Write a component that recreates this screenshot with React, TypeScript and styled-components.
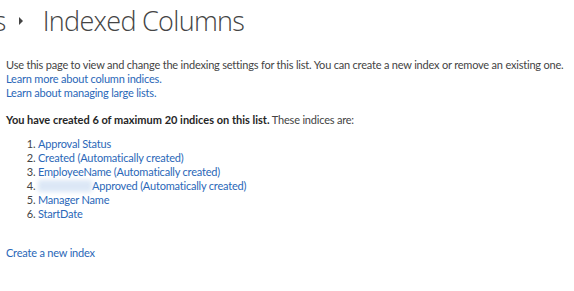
import React from 'react';
import styled, { createGlobalStyle } from 'styled-components';

/* -------------------- Data -------------------- */
const indices: { name: string; auto?: boolean; hidden?: boolean }[] = [
  { name: 'Approval Status' },
  { name: 'Created', auto: true },
  { name: 'EmployeeName', auto: true },
  { name: 'Approved', auto: true, hidden: true },
  { name: 'Manager Name' },
  { name: 'StartDate' },
];

/* ------------------- Style ------------------- */
const GlobalStyle = createGlobalStyle`
  html, body {
    margin: 0;
    padding: 0;
    background: #fff;
    overflow: hidden;
  }
  body {
    font-family: 'Open Sans', 'Noto Sans', sans-serif;
    color: #444;
  }
`;

const Page = styled.div`
  width: 574px;
  height: 291px;
  overflow: hidden;
`;

const TitleRow = styled.div`
  display: flex;
  align-items: center;
  height: 40px;
  margin-left: -85px;
  white-space: nowrap;
  font-weight: 300;
  font-size: 27px;
  color: #444;
  letter-spacing: -0.7px;
`;

const Crumb = styled.span`
  color: #444;
`;

const Arrow = styled.span`
  display: inline-block;
  width: 0;
  height: 0;
  margin: 2px 20px 0 13px;
  border-top: 4px solid transparent;
  border-bottom: 4px solid transparent;
  border-left: 4px solid #444;
`;

const Content = styled.div`
  padding: 18px 0 0 6px;
  font-family: 'Lato', 'Open Sans', sans-serif;
  font-size: 11px;
  line-height: 14px;
  letter-spacing: -0.2px;
`;

const Intro = styled.div`
  white-space: nowrap;
`;

const Link = styled.a`
  color: #2a67b8;
  text-decoration: none;
  display: block;
`;

const Summary = styled.div`
  margin-top: 13px;
  strong {
    color: #262626;
    font-weight: 700;
    letter-spacing: 0;
  }
`;

const List = styled.ol`
  margin: 10px 0 0 0;
  padding-left: 32px;
  li {
    color: #444;
  }
`;

const ItemText = styled.span`
  color: #2a67b8;
`;

const Blurred = styled.span`
  display: inline-block;
  width: 54px;
  height: 12px;
  vertical-align: -2px;
  background: #d4e2f4;
  filter: blur(2px);
  opacity: 0.8;
`;

const CreateLink = styled(Link)`
  margin-top: 25px;
`;

/* -------------------- DOM -------------------- */
export default function App() {
  return (
    <Page>
      <GlobalStyle />
      <TitleRow>
        <Crumb>Settings</Crumb>
        <Arrow />
        <Crumb>Indexed Columns</Crumb>
      </TitleRow>
      <Content>
        <Intro>
          Use this page to view and change the indexing settings for this list. You can create a new
          index or remove an existing one.
        </Intro>
        <Link href="#">Learn more about column indices.</Link>
        <Link href="#">Learn about managing large lists.</Link>
        <Summary>
          <strong>You have created 6 of maximum 20 indices on this list.</strong> These indices are:
        </Summary>
        <List>
          {indices.map((item) => (
            <li key={item.name}>
              <ItemText>
                {item.hidden && <Blurred />}
                {item.name}
                {item.auto ? ' (Automatically created)' : ''}
              </ItemText>
            </li>
          ))}
        </List>
        <CreateLink href="#">Create a new index</CreateLink>
      </Content>
    </Page>
  );
}
